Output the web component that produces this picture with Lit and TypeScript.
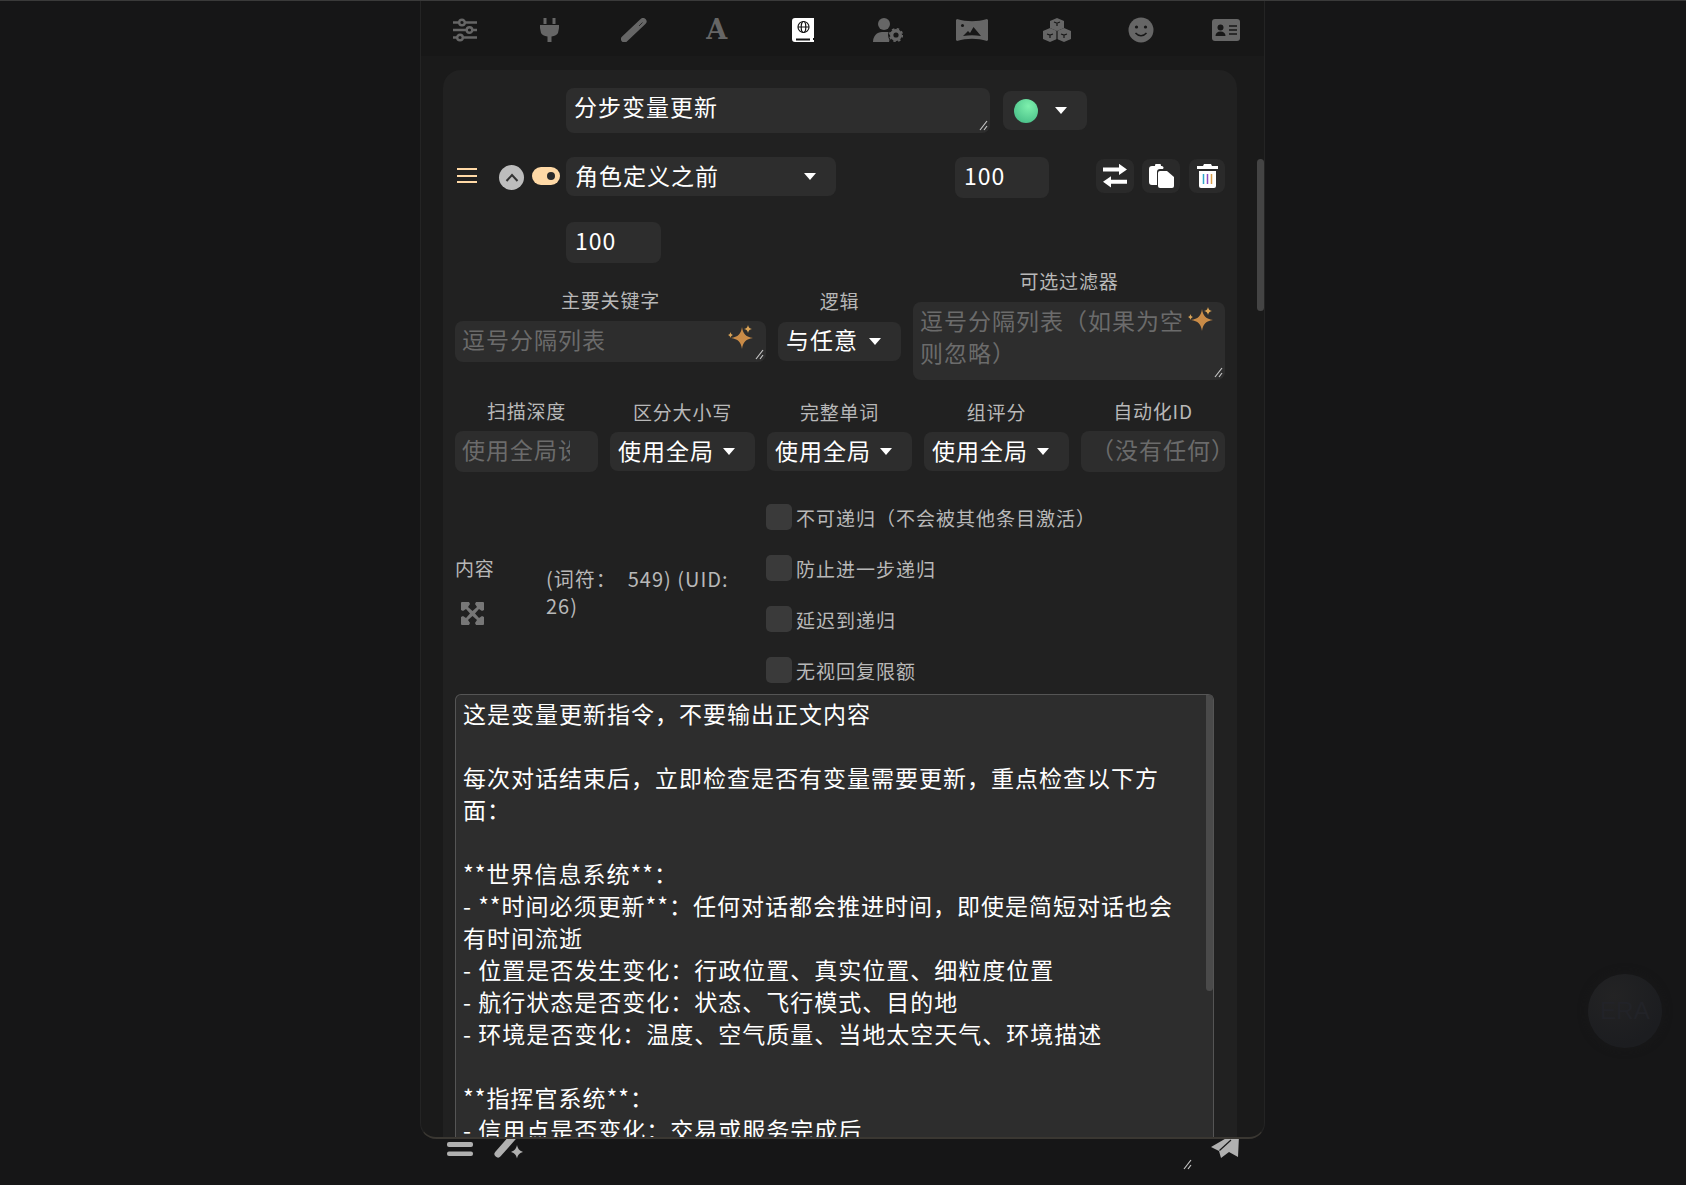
import { LitElement, html, css, svg } from "lit";
import { customElement } from "lit/decorators.js";

const G = "#666";

const navIcons = [
  { w: 24, h: 24, body: svg`<g fill="none" stroke="${G}" stroke-width="2.400"><path d="M0 4.500h24M0 12h24M0 19.500h24"/><circle cx="9" cy="4.500" r="2.800" fill="#171717"/><circle cx="16.500" cy="12" r="2.800" fill="#171717"/><circle cx="7" cy="19.500" r="2.800" fill="#171717"/></g>` },
  { w: 19, h: 24, body: svg`<path fill="${G}" d="M3.500 0h3v6h-3zM12.500 0h3v6h-3zM0 7h19v3l-1 5c-1 2-3 3-6.500 3.500V24h-4v-5.500C4 18 2 17 1 15L0 10z"/>` },
  { w: 26, h: 24, body: svg`<path d="M3.500 21 22 3.500" stroke="${G}" stroke-width="7" stroke-linecap="round"/><path d="M18 8l3.500-3.500" stroke="#2a2a2a" stroke-width="1"/>` },
  { w: 0, h: 0, body: null },
  { w: 22, h: 24, body: svg`<path fill="#fff" d="M3 0h19v20h-1v2h1v2H3a3 3 0 0 1-3-3V3a3 3 0 0 1 3-3z"/><path fill="#141414" d="M4 20.500h14v2H4z"/><g fill="none" stroke="#141414" stroke-width="1.200"><circle cx="11.500" cy="9" r="5.500"/><ellipse cx="11.500" cy="9" rx="2.300" ry="5.500"/><path d="M6 9h11"/></g>` },
  { w: 30, h: 24, body: svg`<circle cx="11" cy="6" r="6" fill="${G}"/><path fill="${G}" d="M0 24c0-6 4-10 9-10h5c2 0 3 .5 4 1l-2 9z"/><circle cx="23" cy="17" r="8" fill="#171717"/><circle cx="23" cy="17" r="4.300" fill="none" stroke="${G}" stroke-width="3.400"/><circle cx="23" cy="17" r="6.300" fill="none" stroke="${G}" stroke-width="1.600" stroke-dasharray="2.500 2.450"/>` },
  { w: 32, h: 22, body: svg`<path fill="${G}" d="M1 0c10 3 20 3 30 0l1 1v20l-1 1c-10-3-20-3-30 0l-1-1V1z"/><circle cx="6.500" cy="6.500" r="1.500" fill="#171717"/><path fill="#171717" d="M7 17l5-5 2 2 3.500-6 7.500 9c-6-1-12-1-18 0z"/>` },
  { w: 28, h: 24, body: svg`<g fill="${G}"><path d="M14 0l7 3v7l-7 3-7-3V3z"/><path d="M7 10l7 3v8l-7 3-7-3v-8z"/><path d="M21 10l7 3v8l-7 3-7-3v-8z"/></g><g stroke="#171717" stroke-width="1.200" fill="none"><path d="M11 4l3 1.200L17 4M14 5.500V8M4 16l3 1 3-1M7 17v3M18 16l3 1 3-1M21 17v3M14 13v11"/></g>` },
  { w: 26, h: 26, body: svg`<circle cx="13" cy="13" r="12.500" fill="${G}"/><circle cx="8.500" cy="10" r="1.600" fill="#171717"/><circle cx="17.500" cy="10" r="1.600" fill="#171717"/><path d="M7.500 16c3 3.500 8 3.500 11 0" stroke="#171717" stroke-width="1.500" fill="none"/>` },
  { w: 28, h: 22, body: svg`<rect width="28" height="22" rx="3" fill="${G}"/><circle cx="8.500" cy="8.500" r="3" fill="#171717"/><path fill="#171717" d="M3.500 17c0-3 2-4.500 5-4.500s5 1.500 5 4.500z"/><path stroke="#171717" stroke-width="1.500" d="M17 7h8M17 11h8M17 15h8"/>` },
];

const CONTENT = `这是变量更新指令，不要输出正文内容

每次对话结束后，立即检查是否有变量需要更新，重点检查以下方面：

**世界信息系统**：
- **时间必须更新**：任何对话都会推进时间，即使是简短对话也会有时间流逝
- 位置是否发生变化：行政位置、真实位置、细粒度位置
- 航行状态是否变化：状态、飞行模式、目的地
- 环境是否变化：温度、空气质量、当地太空天气、环境描述

**指挥官系统**：
- 信用点是否变化：交易或服务完成后`;

const sparkle = html`<svg class="sparkle" viewBox="0 0 26 24" width="26" height="24"><path fill="#c98b47" d="M15 2c1 7 4 10 11 11-7 1-10 4-11 11-1-7-4-10-11-11 7-1 10-4 11-11z"/><path fill="#dba456" d="M21 0c.5 2.500 1.500 3.500 4 4-2.500.5-3.500 1.500-4 4-.5-2.500-1.500-3.500-4-4 2.500-.5 3.500-1.500 4-4zM3.500 7c.4 2 1.200 2.800 3 3-1.800.4-2.600 1-3 3-.4-2-1.200-2.600-3-3 1.800-.2 2.600-1 3-3z"/></svg>`;

const grip = html`<svg class="grip" viewBox="0 0 9 11" width="9" height="11"><path d="M1 10 8 1M5 10l3-4" stroke="#c4c4c4" stroke-width="1.200" fill="none"/></svg>`;

@customElement("app-root")
export class AppRoot extends LitElement {
  static styles = css`
    :host {
      display: flex;
      flex-direction: column;
      justify-content: flex-end;
      position: relative;
      min-height: 100vh;
      box-sizing: border-box;
      overflow: hidden;
      background: #161617;
      border-top: 1px solid #3a3a3a;
      font-family: "Noto Sans CJK SC", "Noto Sans", sans-serif;
      font-size: 23px;
      letter-spacing: 1px;
      color: #fff;
    }
    * { box-sizing: border-box; }
    .drawer {
      position: absolute;
      top: 0;
      left: 420px;
      width: 845px;
      height: 1138px;
      overflow: hidden;
      background: #1a1a1a;
      border: 1px solid #242424;
      border-top: 0;
      border-bottom: 2px solid #3a3732;
      border-radius: 0 0 16px 16px;
      z-index: 2;
    }
    .nav {
      display: flex;
      height: 56px;
      padding: 2px 0 0 2px;
      background: #171717;
      border-bottom: 1px solid #1a1a1a;
    }
    .nav-item {
      flex: none;
      width: 84.5px;
      display: flex;
      align-items: center;
      justify-content: center;
    }
    .font-a {
      margin-right: 4px;
      font-family: "DejaVu Serif", serif;
      font-weight: 700;
      font-size: 27px;
      line-height: 1;
      letter-spacing: 0;
      color: #666;
    }
    .page-thumb {
      position: absolute;
      top: 158px;
      right: 0;
      width: 7px;
      height: 152px;
      border-radius: 4px;
      background: #444;
    }
    .card {
      width: 794px;
      margin: 13px 0 0 22px;
      padding: 18px 12px 0;
      background: #212121;
      border-radius: 18px;
      display: flex;
      flex-direction: column;
    }
    .field {
      position: relative;
      background: #2d2d2d;
      border-radius: 8px;
      line-height: 32px;
      overflow: hidden;
      white-space: nowrap;
    }
    .grip { position: absolute; right: 2px; bottom: 2px; }
    .sparkle { position: absolute; }
    .ph { color: #6b6b6b; }
    .row-name {
      display: flex;
      align-items: center;
      gap: 13px;
      margin-left: 111px;
    }
    .name { width: 424px; height: 45px; padding: 2px 8px; }
    .select {
      display: flex;
      align-items: center;
      justify-content: space-between;
      height: 39px;
      padding: 0 20px 0 8px;
      background: #2d2d2d;
      border-radius: 8px;
      white-space: nowrap;
      line-height: 32px;
    }
    .select span { position: relative; top: -2px; }
    .caret {
      flex: none;
      width: 0;
      height: 0;
      border-left: 6px solid transparent;
      border-right: 6px solid transparent;
      border-top: 7px solid #fff;
    }
    .color { width: 84px; padding-left: 11px; }
    .dot {
      width: 24px;
      height: 24px;
      border-radius: 50%;
      background: radial-gradient(circle at 60% 30%, #7ef0ad, #4ec48c 75%);
    }
    .row-pos {
      display: flex;
      align-items: flex-start;
      margin-top: 24px;
      height: 41px;
    }
    .drag {
      width: 20px;
      height: 15px;
      margin: 11px 0 0 2px;
      border-top: 2px solid #ffd9a6;
      border-bottom: 2px solid #ffd9a6;
      position: relative;
    }
    .drag::after {
      content: "";
      position: absolute;
      left: 0;
      right: 0;
      top: 4.500px;
      height: 2px;
      background: #ffd9a6;
    }
    .chev {
      flex: none;
      width: 25px;
      height: 25px;
      margin: 8px 0 0 22px;
      border-radius: 50%;
      background: #bdbdbd;
      display: flex;
      align-items: center;
      justify-content: center;
    }
    .toggle {
      flex: none;
      width: 28px;
      height: 18px;
      margin: 10px 0 0 8px;
      border-radius: 9px;
      background: #ffd9a6;
      display: flex;
      align-items: center;
      justify-content: flex-end;
      padding-right: 5px;
    }
    .toggle i {
      width: 8px;
      height: 8px;
      border-radius: 50%;
      background: #2a2a2a;
    }
    .pos { width: 270px; margin-left: 6px; padding-left: 9px; }
    .num { height: 41px; padding: 2px 9px; }
    .order { width: 94px; margin-left: 119px; }
    .action {
      flex: none;
      height: 34px;
      margin-top: 2px;
      background: #2a2a2a;
      border-radius: 8px;
      display: flex;
      align-items: center;
      justify-content: center;
    }
    .a1 { width: 38px; margin-left: 47px; }
    .a2 { width: 38px; margin-left: 8px; }
    .a3 { width: 36px; margin-left: 9px; }
    .row-depth { margin: 24px 0 0 111px; }
    .depth { width: 95px; }
    .row-keys {
      display: grid;
      grid-template-columns: 311px 123px 312px;
      gap: 12px;
      align-items: center;
      margin-top: 7px;
    }
    .col { display: flex; flex-direction: column; }
    .label {
      height: 26px;
      line-height: 22px;
      margin-bottom: 6px;
      text-align: center;
      font-size: 19px;
      letter-spacing: 0.800px;
      color: #b8b8b8;
      white-space: nowrap;
    }
    .input { height: 41px; padding: 2px 7px; }
    .keyword .sparkle { right: 13px; top: 4px; }
    .filter {
      height: 78px;
      padding: 2px 30px 0 7px;
      white-space: normal;
    }
    .filter .sparkle { right: 12px; top: 5px; }
    .row-opts {
      display: grid;
      grid-template-columns: 143px 145px 145px 145px 144px;
      gap: 12px;
      align-items: center;
      margin-top: 20px;
    }
    .opt-label { margin-bottom: 5px; }
    .clip { display: block; width: 108px; overflow: hidden; white-space: nowrap; }
    .row-head {
      display: flex;
      align-items: center;
      margin-top: 32px;
    }
    .head-left { width: 91px; flex: none; padding-bottom: 8px; }
    .head-title {
      font-size: 19px;
      letter-spacing: 0.800px;
      line-height: 26px;
      color: #b8b8b8;
      margin-bottom: 21px;
    }
    .expand { display: block; margin-left: 6px; }
    .tokens {
      width: 220px;
      flex: none;
      font-size: 20px;
      letter-spacing: 1px;
      line-height: 27px;
      color: #b8b8b8;
      margin-top: -3px;
      padding-right: 24px;
    }
    .checks { display: flex; flex-direction: column; gap: 25px; }
    .check {
      display: flex;
      gap: 4px;
      height: 26px;
      font-size: 19px;
      letter-spacing: 1px;
      line-height: 26px;
      color: #b8b8b8;
      white-space: nowrap;
    }
    .check span { position: relative; top: 1px; }
    .box {
      flex: none;
      width: 26px;
      height: 26px;
      border-radius: 5px;
      background: #3a3a3a;
    }
    .content {
      position: relative;
      width: 759px;
      height: 560px;
      margin: 11px 0 0 0;
      padding: 2px 22px 0 7px;
      background: #2d2d2d;
      border: 1px solid #555;
      border-bottom: 0;
      border-radius: 6px 6px 0 0;
      line-height: 32px;
      white-space: pre-wrap;
      overflow: hidden;
    }
    .content-thumb {
      position: absolute;
      top: 0;
      right: 0;
      width: 7px;
      height: 296px;
      background: #4a4a4a;
      border-radius: 0 4px 4px 4px;
    }
    .footer {
      display: flex;
      align-items: flex-start;
      height: 60px;
      margin-left: 447px;
      width: 793px;
      padding-top: 3px;
      position: relative;
    }
    .wand { margin-left: 20px; }
    .send { margin-left: auto; }
    .footer .grip { right: 48px; bottom: 15px; }
    .ball {
      position: absolute;
      left: 1588px;
      top: 973px;
      width: 74px;
      height: 74px;
      border-radius: 50%;
      background: radial-gradient(circle at 35% 30%, #232324, #1c1d20 70%);
      box-shadow: 0 0 10px #19191a;
      color: #222328;
      display: flex;
      align-items: center;
      justify-content: center;
      font: 400 24px "Liberation Sans", sans-serif;
      letter-spacing: 0;
    }
  `;

  private select(text: string, cls = "") {
    return html`<div class="select ${cls}"><span>${text}</span><i class="caret"></i></div>`;
  }

  render() {
    return html`
      <div class="drawer">
        <div class="nav">
          ${navIcons.map((i) =>
            i.body
              ? html`<div class="nav-item"><svg viewBox="0 0 ${i.w} ${i.h}" width=${i.w} height=${i.h}>${i.body}</svg></div>`
              : html`<div class="nav-item"><span class="font-a">A</span></div>`
          )}
        </div>
        <div class="page-thumb"></div>
        <div class="card">
          <div class="row-name">
            <div class="field name">分步变量更新${grip}</div>
            <div class="select color"><i class="dot"></i><i class="caret"></i></div>
          </div>
          <div class="row-pos">
            <div class="drag"></div>
            <div class="chev"><svg viewBox="0 0 14 9" width="14" height="9"><path d="M1.500 8l5.500-6 5.500 6" stroke="#333" stroke-width="2" fill="none"/></svg></div>
            <div class="toggle"><i></i></div>
            ${this.select("角色定义之前", "pos")}
            <div class="field num order">100</div>
            <div class="action a1"><svg viewBox="0 0 24 24" width="24" height="24"><path fill="#fff" d="M0 5.500h16V1l8 7-8 7v-4.500H0z" transform="translate(0 -1) scale(1 .8)"/><path fill="#fff" d="M24 18.500H8V23l-8-7 8-7v4.500h16z" transform="translate(0 5) scale(1 .8)"/></svg></div>
            <div class="action a2"><svg viewBox="0 0 25 24" width="25" height="24"><path fill="#fff" d="M3 2h3a3 3 0 0 1 6 0h1a2 2 0 0 1 1 3h-3a3 3 0 0 0-3 3v13H3a3 3 0 0 1-3-3V5a3 3 0 0 1 3-3z"/><path fill="#fff" d="M11 7h7l7 6v9a2 2 0 0 1-2 2H11a2 2 0 0 1-2-2V9a2 2 0 0 1 2-2z"/></svg></div>
            <div class="action a3"><svg viewBox="0 0 21 24" width="21" height="24"><path fill="#fff" d="M7 0h7l1 2h6v3H0V2h6z"/><path fill="#fff" d="M2 7h17v15a2 2 0 0 1-2 2H4a2 2 0 0 1-2-2z"/><path d="M6.500 10v10" stroke="#2fa6c9" stroke-width="1.500"/><path d="M10.500 10v10" stroke="#8a4bc0" stroke-width="1.500"/><path d="M14.500 10v10" stroke="#d9a04b" stroke-width="1.500"/></svg></div>
          </div>
          <div class="row-depth"><div class="field num depth">100</div></div>
          <div class="row-keys">
            <div class="col">
              <div class="label">主要关键字</div>
              <div class="field input ph keyword">逗号分隔列表${sparkle}${grip}</div>
            </div>
            <div class="col">
              <div class="label">逻辑</div>
              ${this.select("与任意")}
            </div>
            <div class="col">
              <div class="label">可选过滤器</div>
              <div class="field ph filter">逗号分隔列表（如果为空则忽略）${sparkle}${grip}</div>
            </div>
          </div>
          <div class="row-opts">
            <div class="col">
              <div class="label opt-label">扫描深度</div>
              <div class="field input ph"><span class="clip">使用全局设置</span></div>
            </div>
            ${["区分大小写", "完整单词", "组评分"].map(
              (t) => html`<div class="col"><div class="label opt-label">${t}</div>${this.select("使用全局")}</div>`
            )}
            <div class="col">
              <div class="label opt-label">自动化ID</div>
              <div class="field input ph" style="padding-left:10px">（没有任何）</div>
            </div>
          </div>
          <div class="row-head">
            <div class="head-left">
              <div class="head-title">内容</div>
              <svg class="expand" viewBox="0 0 23 23" width="23" height="23"><rect width="23" height="23" rx="1" fill="#777"/><g fill="#212121"><path d="M8 0h7l-1 2 2 3-4.500 4L7 5l2-3z"/><path d="M8 23h7l-1-2 2-3-4.500-4L7 18l2 3z"/><path d="M0 8v7l2-1 3 2 4-4.500L5 7 2 9z"/><path d="M23 8v7l-2-1-3 2-4-4.500L18 7l3 2z"/></g></svg>
            </div>
            <div class="tokens">(词符：&nbsp;&nbsp;549) (UID: 26)</div>
            <div class="checks">
              ${["不可递归（不会被其他条目激活）", "防止进一步递归", "延迟到递归", "无视回复限额"].map(
                (t) => html`<div class="check"><i class="box"></i><span>${t}</span></div>`
              )}
            </div>
          </div>
          <div class="content">${CONTENT}<div class="content-thumb"></div></div>
        </div>
      </div>
      <div class="footer">
        <svg viewBox="0 0 26 32" width="26" height="32"><rect y="14" width="26" height="5" rx="2" fill="#b0b0b0"/><rect y="23.500" width="26" height="4.500" rx="2" fill="#b0b0b0"/></svg>
        <svg class="wand" viewBox="0 0 30 32" width="30" height="32"><path d="M5 26 20 9" stroke="#b0b0b0" stroke-width="7" stroke-linecap="round"/><path fill="#b0b0b0" d="M24 17c.8 3.500 2 5.200 6 7-4 1.300-5.200 3-6 6.500-.8-3.500-2-5.200-6-6.500 4-1.800 5.200-3.500 6-7z"/></svg>
        ${grip}
        <svg class="send" viewBox="0 0 30 32" width="30" height="32"><path fill="#b0b0b0" d="M29 8 28 29 19 24 11 30 9 23 1 19 20 8z"/><path d="M21 12 9.500 22.500" stroke="#161617" stroke-width="1.200"/></svg>
      </div>
      <div class="ball">ERA</div>
    `;
  }
}
